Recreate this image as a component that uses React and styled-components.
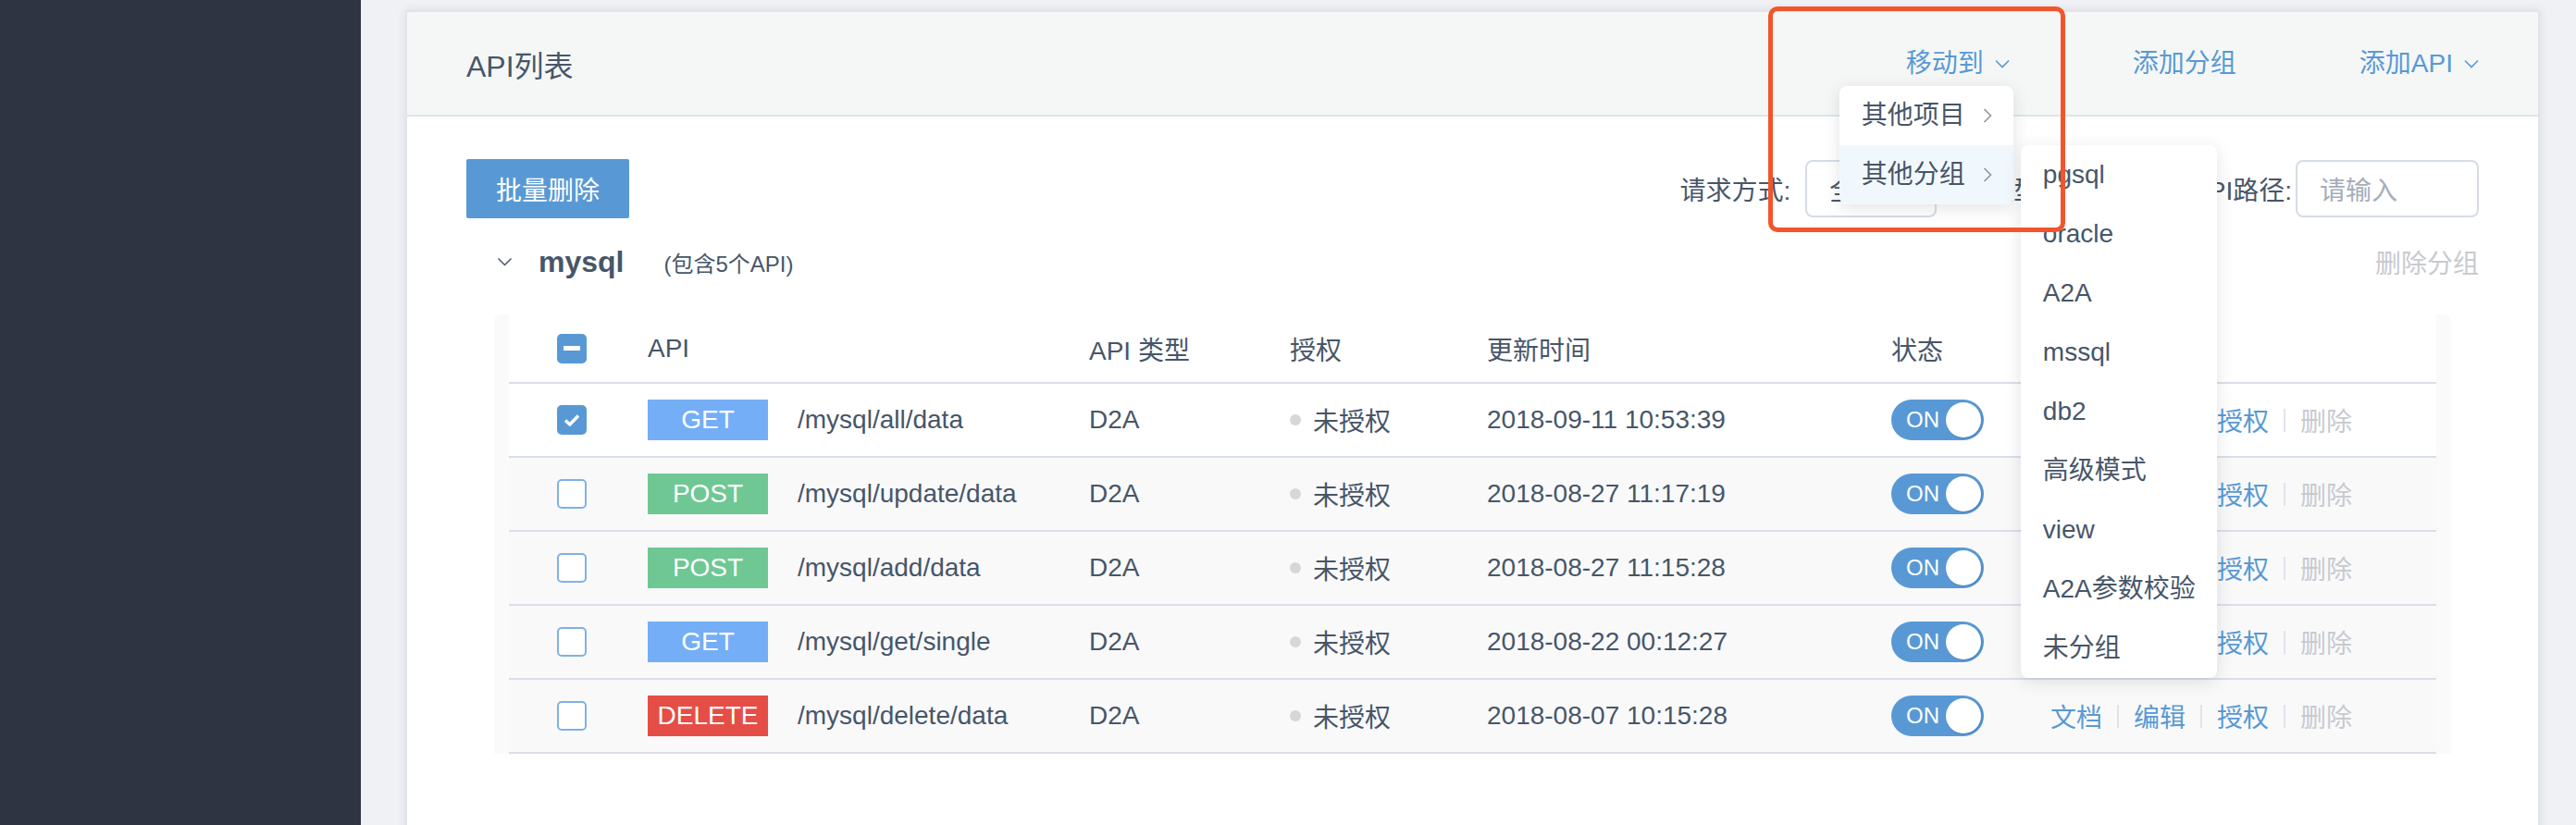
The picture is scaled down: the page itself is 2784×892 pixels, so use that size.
import styled, { createGlobalStyle } from "styled-components";

const GlobalStyle = createGlobalStyle`
  html, body {
    margin: 0;
    padding: 0;
  }
  body {
    font-family: "Liberation Sans", "Noto Sans CJK SC", sans-serif;
    color: #475669;
    background: #eff1f5;
  }
`;

const Page = styled.div`
  display: flex;
  height: 892px;
  overflow: hidden;
`;

const Sidebar = styled.aside`
  width: 390px;
  flex-shrink: 0;
  background: #2e3441;
`;

const Main = styled.main`
  flex: 1;
  min-width: 0;
  padding: 11px 39px 0 48px;
  background: #eff1f5;
`;

const Card = styled.section`
  min-height: 900px;
  background: #fff;
  border: 2px solid #e1e5ea;
  box-shadow: 0 0 10px rgba(40, 50, 70, 0.1);
`;

const CardHeader = styled.header`
  height: 113px;
  box-sizing: border-box;
  padding: 0 64px;
  display: flex;
  align-items: center;
  justify-content: space-between;
  background: #f5f7f6;
  border-bottom: 2px solid #dfe4e8;
`;

const Title = styled.h1`
  margin: 0;
  font-size: 32px;
  font-weight: 400;
  color: #475669;
`;

const HeaderNav = styled.nav`
  display: flex;
  align-items: center;
  gap: 133px;
`;

const NavItem = styled.div`
  position: relative;
  display: flex;
  align-items: center;
  gap: 12px;
  height: 40px;
  font-size: 28px;
  line-height: 40px;
  color: #5899d5;
  cursor: pointer;
`;

const Menu = styled.div`
  position: absolute;
  top: calc(100% + 4px);
  left: ${(p) => p.$left}px;
  width: ${(p) => p.$width}px;
  background: #fff;
  border-radius: 8px;
  box-shadow: 0 4px 18px rgba(30, 40, 60, 0.13);
  z-index: 10;
  cursor: default;
`;

const SubMenu = styled(Menu)`
  top: 0;
  left: calc(100% + 8px);
`;

const MenuItem = styled.div`
  position: relative;
  height: 64px;
  display: flex;
  align-items: center;
  justify-content: space-between;
  padding: 0 23px 0 24px;
  font-size: 28px;
  color: #475669;
  background: ${(p) => (p.$active ? "#f1f8fd" : "transparent")};
  border-radius: ${(p) => p.$radius || "0"};
`;

const Highlight = styled.div`
  position: absolute;
  left: -149px;
  top: -42px;
  width: 321px;
  height: 244px;
  box-sizing: border-box;
  border: 5px solid #f2552c;
  border-radius: 10px;
  z-index: 20;
  pointer-events: none;
`;

const CardBody = styled.div`
  padding: 46px 64px 0;
`;

const Toolbar = styled.div`
  display: flex;
  align-items: center;
  justify-content: space-between;
  height: 64px;
`;

const PrimaryButton = styled.button`
  width: 176px;
  height: 64px;
  border: none;
  border-radius: 2px;
  background: #5899d5;
  color: #fff;
  font-family: inherit;
  font-size: 28px;
  cursor: pointer;
`;

const Filters = styled.div`
  display: flex;
  align-items: center;
`;

const FilterItem = styled.div`
  display: flex;
  align-items: center;
  margin-left: ${(p) => p.$space ?? 10}px;
`;

const FilterLabel = styled.span`
  font-size: 28px;
  margin-right: ${(p) => p.$gap || 16}px;
  white-space: nowrap;
`;

const Field = styled.div`
  width: ${(p) => p.$width}px;
  height: 62px;
  box-sizing: border-box;
  border: 2px solid #d6dce5;
  border-radius: 8px;
  padding-left: 24px;
  display: flex;
  align-items: center;
  font-size: 28px;
  color: ${(p) => (p.$placeholder ? "#a4adbb" : "#475669")};
  background: #fff;
`;

const GroupRow = styled.div`
  display: flex;
  align-items: center;
  height: 48px;
  margin-top: 23px;
`;

const GroupToggle = styled.span`
  display: inline-flex;
  margin-left: 33px;
  color: #475669;
`;

const GroupName = styled.span`
  margin-left: 28px;
  font-size: 32px;
  font-weight: 700;
  color: #475669;
`;

const GroupCount = styled.span`
  margin-left: 43px;
  font-size: 24px;
  color: #475669;
`;

const GroupDelete = styled.span`
  margin-left: auto;
  font-size: 28px;
  color: #c8cacf;
  cursor: pointer;
`;

const TableWrap = styled.div`
  margin: 33px 30px 0;
  padding: 0 16px;
  background: #fafafa;
  border-radius: 8px 8px 0 0;
`;

const Row = styled.div`
  display: grid;
  grid-template-columns: 150px 477px 217px 213px 437px 172px 1fr;
  align-items: center;
  height: ${(p) => (p.$head ? 75 : 80)}px;
  box-sizing: border-box;
  border-bottom: 2px solid #d9dee7;
  background: ${(p) => (p.$muted ? "#f9f9fa" : "#fff")};
  font-size: 28px;
  color: #475669;
`;

const Cell = styled.div`
  display: flex;
  align-items: center;
  white-space: nowrap;
  padding-left: ${(p) => p.$indent || 0}px;
`;

const CheckBox = styled.span`
  width: 32px;
  height: 32px;
  box-sizing: border-box;
  border-radius: 5px;
  display: inline-flex;
  align-items: center;
  justify-content: center;
  background: ${(p) => (p.$on ? "#5899d5" : "#fff")};
  border: 2px solid ${(p) => (p.$on ? "#5899d5" : "#7fb1e3")};
`;

const Dash = styled.span`
  width: 18px;
  height: 5px;
  background: #fff;
`;

const methodColors = {
  GET: "#74aef6",
  POST: "#6fc894",
  DELETE: "#e54d47",
};

const Method = styled.span`
  width: 130px;
  height: 44px;
  display: inline-flex;
  align-items: center;
  justify-content: center;
  background: ${(p) => methodColors[p.$method]};
  color: #fff;
  font-size: 28px;
  margin-right: 32px;
`;

const Dot = styled.span`
  width: 12px;
  height: 12px;
  border-radius: 50%;
  background: #d6d7d9;
  margin-right: 13px;
`;

const Toggle = styled.span`
  width: 100px;
  height: 44px;
  box-sizing: border-box;
  border-radius: 22px;
  background: #5899d5;
  display: inline-flex;
  align-items: center;
  justify-content: space-between;
  padding: 0 3px 0 16px;
  color: #fff;
  font-size: 24px;
`;

const Knob = styled.span`
  width: 38px;
  height: 38px;
  border-radius: 50%;
  background: #fff;
  box-shadow: 1px 1px 2px rgba(20, 60, 110, 0.25);
`;

const Action = styled.span`
  color: ${(p) => (p.$muted ? "#c8cacf" : "#5899d5")};
  cursor: pointer;
`;

const Divider = styled.span`
  width: 2px;
  height: 25px;
  margin: 0 16px;
  background: #dfe3ea;
`;

function ChevronDown({ width = 16, height = 10, stroke = 1.6 }) {
  return (
    <svg width={width} height={height} viewBox="0 0 16 10">
      <polyline points="1,1.5 8,8.5 15,1.5" fill="none" stroke="currentColor" strokeWidth={stroke} />
    </svg>
  );
}

function ChevronRight() {
  return (
    <svg width="10" height="16" viewBox="0 0 10 16">
      <polyline points="1.5,1 8.5,8 1.5,15" fill="none" stroke="#8d95a1" strokeWidth="1.6" />
    </svg>
  );
}

function CheckMark() {
  return (
    <svg width="18" height="14" viewBox="0 0 18 14">
      <polyline points="2,7.5 6.8,12 16,2.5" fill="none" stroke="#fff" strokeWidth="3.4" strokeLinejoin="round" />
    </svg>
  );
}

const groups = ["pgsql", "oracle", "A2A", "mssql", "db2", "高级模式", "view", "A2A参数校验", "未分组"];

const apis = [
  { method: "GET", path: "/mysql/all/data", time: "2018-09-11 10:53:39", checked: true },
  { method: "POST", path: "/mysql/update/data", time: "2018-08-27 11:17:19" },
  { method: "POST", path: "/mysql/add/data", time: "2018-08-27 11:15:28" },
  { method: "GET", path: "/mysql/get/single", time: "2018-08-22 00:12:27" },
  { method: "DELETE", path: "/mysql/delete/data", time: "2018-08-07 10:15:28" },
];

function MoveMenu() {
  return (
    <Menu $left={-72} $width={188}>
      <MenuItem $radius="8px 8px 0 0">
        其他项目
        <ChevronRight />
      </MenuItem>
      <MenuItem $active $radius="0 0 8px 8px">
        其他分组
        <ChevronRight />
        <SubMenu $width={212}>
          {groups.map((g) => (
            <MenuItem key={g}>{g}</MenuItem>
          ))}
        </SubMenu>
      </MenuItem>
    </Menu>
  );
}

function ApiRow({ api, muted }) {
  return (
    <Row $muted={muted}>
      <Cell $indent={52}>
        <CheckBox $on={api.checked}>{api.checked && <CheckMark />}</CheckBox>
      </Cell>
      <Cell>
        <Method $method={api.method}>{api.method}</Method>
        {api.path}
      </Cell>
      <Cell>D2A</Cell>
      <Cell>
        <Dot />
        未授权
      </Cell>
      <Cell>{api.time}</Cell>
      <Cell>
        <Toggle>
          ON
          <Knob />
        </Toggle>
      </Cell>
      <Cell>
        <Action>文档</Action>
        <Divider />
        <Action>编辑</Action>
        <Divider />
        <Action>授权</Action>
        <Divider />
        <Action $muted>删除</Action>
      </Cell>
    </Row>
  );
}

export default function App() {
  return (
    <>
      <GlobalStyle />
      <Page>
        <Sidebar />
        <Main>
          <Card>
            <CardHeader>
              <Title>API列表</Title>
              <HeaderNav>
                <NavItem>
                  移动到
                  <ChevronDown />
                  <MoveMenu />
                  <Highlight />
                </NavItem>
                <NavItem>添加分组</NavItem>
                <NavItem>
                  添加API
                  <ChevronDown />
                </NavItem>
              </HeaderNav>
            </CardHeader>
            <CardBody>
              <Toolbar>
                <PrimaryButton>批量删除</PrimaryButton>
                <Filters>
                  <FilterItem $space={0}>
                    <FilterLabel>请求方式:</FilterLabel>
                    <Field $width={142}>全部</Field>
                  </FilterItem>
                  <FilterItem>
                    <FilterLabel>API类型:</FilterLabel>
                    <Field $width={118}>全部</Field>
                  </FilterItem>
                  <FilterItem $space={22}>
                    <FilterLabel $gap={4}>API路径:</FilterLabel>
                    <Field $width={198} $placeholder>
                      请输入
                    </Field>
                  </FilterItem>
                </Filters>
              </Toolbar>
              <GroupRow>
                <GroupToggle>
                  <ChevronDown width={17} height={10} stroke={1.5} />
                </GroupToggle>
                <GroupName>mysql</GroupName>
                <GroupCount>(包含5个API)</GroupCount>
                <GroupDelete>删除分组</GroupDelete>
              </GroupRow>
              <TableWrap>
                <Row $head>
                  <Cell $indent={52}>
                    <CheckBox $on>
                      <Dash />
                    </CheckBox>
                  </Cell>
                  <Cell>API</Cell>
                  <Cell>API 类型</Cell>
                  <Cell>授权</Cell>
                  <Cell>更新时间</Cell>
                  <Cell>状态</Cell>
                  <Cell>操作</Cell>
                </Row>
                {apis.map((api, i) => (
                  <ApiRow key={api.path} api={api} muted={i > 0} />
                ))}
              </TableWrap>
            </CardBody>
          </Card>
        </Main>
      </Page>
    </>
  );
}
